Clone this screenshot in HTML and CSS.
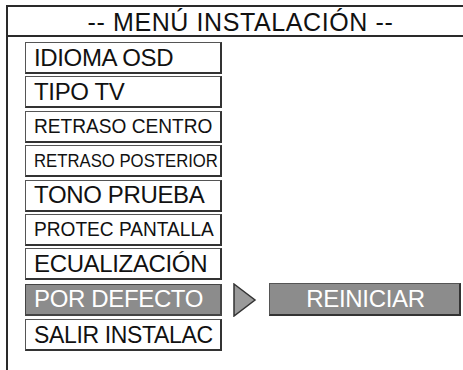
FILE: index.html
```html
<!DOCTYPE html>
<html lang="es">
<head>
<meta charset="utf-8">
<title>Menú instalación</title>
<link rel="stylesheet" href="styles.css">
</head>
<body>
<div class="frame">
  <div class="title">-- MENÚ INSTALACIÓN --</div>
  <div class="menu">
    <div class="row"><div class="item"><span class="label">IDIOMA OSD</span></div></div>
    <div class="row"><div class="item"><span class="label">TIPO TV</span></div></div>
    <div class="row"><div class="item"><span class="label s-centro">RETRASO CENTRO</span></div></div>
    <div class="row"><div class="item"><span class="label s-post">RETRASO POSTERIOR</span></div></div>
    <div class="row"><div class="item"><span class="label">TONO PRUEBA</span></div></div>
    <div class="row"><div class="item"><span class="label s-protec">PROTEC PANTALLA</span></div></div>
    <div class="row"><div class="item"><span class="label">ECUALIZACIÓN</span></div></div>
    <div class="row">
      <div class="item selected"><span class="label">POR DEFECTO</span></div>
      <svg class="arrow" width="24" height="34" viewBox="0 0 24 34">
        <polygon points="1,1 22,17 1,33" fill="#9a9a9a" stroke="#333" stroke-width="1.5" stroke-linejoin="miter"/>
      </svg>
      <div class="sub">REINICIAR</div>
    </div>
    <div class="row"><div class="item"><span class="label s-salir">SALIR INSTALAC</span></div></div>
  </div>
</div>
</body>
</html>
```

FILE: styles.css
```css
html, body {
  margin: 0;
  padding: 0;
  background: #ffffff;
}

body {
  font-family: "Liberation Sans", Arial, sans-serif;
  color: #111111;
  width: 463px;
  height: 370px;
  overflow: hidden;
}

.frame {
  margin-left: 6px;
  margin-top: 5px;
  height: 365px;
  border-top: 2px solid #2a2a2a;
  border-left: 2px solid #2a2a2a;
  box-sizing: border-box;
}

.title {
  height: 30px;
  box-sizing: border-box;
  padding-top: 2px;
  padding-left: 10px;
  border-bottom: 2px solid #2a2a2a;
  font-size: 25px;
  line-height: 26px;
  letter-spacing: 0.6px;
  text-align: center;
}

.menu {
  display: flex;
  flex-direction: column;
  gap: 2.4px;
  padding-top: 5px;
  padding-left: 17px;
}

.row {
  display: flex;
  align-items: center;
}

.item {
  width: 197px;
  height: 32px;
  box-sizing: border-box;
  border: 1px solid #555;
  border-right: 2px solid #333;
  border-bottom: 2px solid #333;
  display: flex;
  align-items: center;
  padding-left: 8px;
  overflow: hidden;
  white-space: nowrap;
}

.label {
  display: inline-block;
  font-size: 24px;
  letter-spacing: -0.35px;
  line-height: 28px;
  transform-origin: left center;
}

.s-centro { font-size: 21px; letter-spacing: 0; transform: scaleX(0.91); }
.s-post { font-size: 19px; letter-spacing: 0; transform: scaleX(0.88); }
.s-protec { font-size: 21px; letter-spacing: 0; transform: scaleX(0.91); }
.s-salir { font-size: 23px; }

.selected {
  background: #8c8c8c;
  color: #ffffff;
  border-color: #444;
}

.arrow {
  margin-left: 11px;
  display: block;
}

.sub {
  margin-left: 12px;
  width: 192px;
  height: 33px;
  box-sizing: border-box;
  background: #8c8c8c;
  border: 1px solid #555;
  border-right: 2px solid #333;
  border-bottom: 2px solid #333;
  color: #ffffff;
  font-size: 24px;
  letter-spacing: -0.3px;
  line-height: 30px;
  text-align: center;
  padding-left: 2px;
}
```
